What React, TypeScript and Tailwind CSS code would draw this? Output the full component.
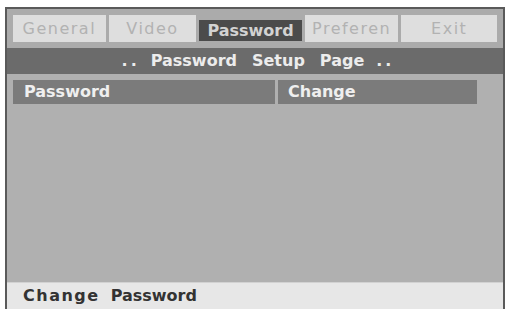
const tabs = [
    { label: "General", width: "w-[94px]", active: false },
    { label: "Video", width: "w-[89px]", active: false },
    { label: "Password", width: "w-[104px]", active: true },
    { label: "Preferen", width: "w-[95px]", active: false },
    { label: "Exit", width: "w-[97px]", active: false },
];

export default function App() {
    return (
        <div
            className="h-[309px] w-[507px] overflow-hidden bg-white"
            style={{ fontFamily: '"DejaVu Sans", "Liberation Sans", sans-serif' }}
        >
            <div className="ml-[5px] mt-[7px] flex h-[302px] w-[500px] flex-col border-x-2 border-t-2 border-[#5a5a5a] bg-[#b0b0b0]">

                {/* Tabs */}
                <div className="flex h-[39px] items-end gap-[3px] bg-[#ababab] px-[6px] pb-[6px]">
                    {tabs.map((tab) => (
                        <div
                            key={tab.label}
                            className={
                                tab.active
                                    ? `${tab.width} mb-px flex h-[21px] items-center justify-center bg-[#4b4b4b] text-[16px] font-bold text-[#d2d2d2]`
                                    : `${tab.width} flex h-[27px] items-center justify-center bg-[#dedede] text-[16px] tracking-[1.5px] text-[#b2b2b2]`
                            }
                        >
                            {tab.label}
                        </div>
                    ))}
                </div>

                {/* Header */}
                <div className="flex h-[26px] items-center justify-center gap-[15px] bg-[#6b6b6b] pl-[6px] text-[16px] font-bold text-[#ececec]">
                    <span className="-mr-[4px] tracking-[3px]">..</span>
                    <span>Password</span>
                    <span>Setup</span>
                    <span>Page</span>
                    <span className="-ml-[3px] tracking-[3px]">..</span>
                </div>

                {/* Row */}
                <div className="mt-[6px] flex h-[24px] gap-[3px] px-[6px] text-[16px] font-bold text-[#efefef]">
                    <div className="flex w-[262px] items-center bg-[#7b7b7b] pl-[11px]">
                        Password
                    </div>
                    <div className="flex w-[199px] items-center bg-[#7b7b7b] pl-[10px]">
                        Change
                    </div>
                </div>

                <div className="flex-1" />

                {/* Status */}
                <div className="flex h-[27px] items-center gap-[11px] border-t border-[#d2d2d2] bg-[#e7e7e7] pl-[16px] text-[16px] font-bold text-[#333333]">
                    <span className="tracking-[1.5px]">Change</span>
                    <span>Password</span>
                </div>

            </div>
        </div>
    );
}
